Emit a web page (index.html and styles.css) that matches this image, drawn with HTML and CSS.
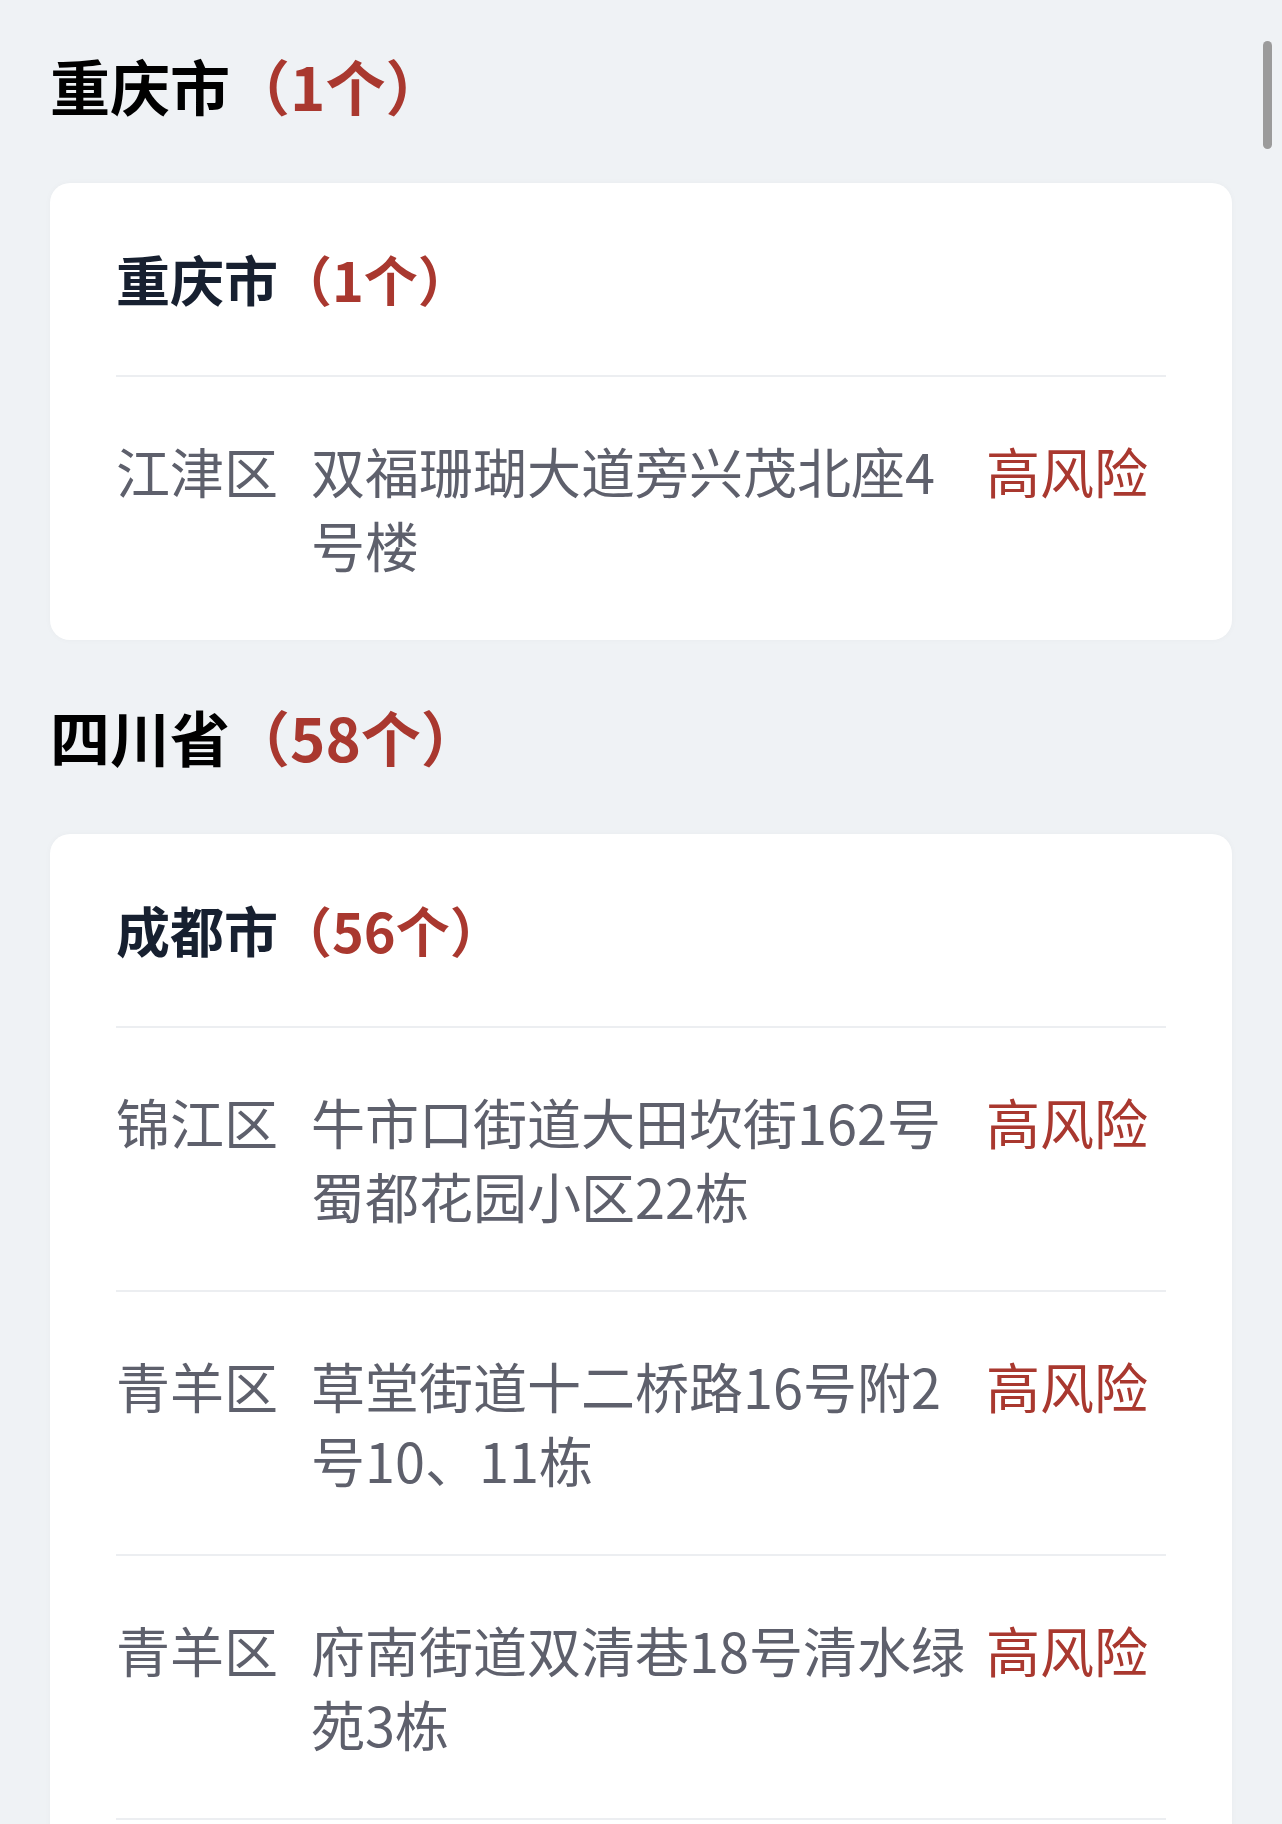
FILE: index.html
```html
<!DOCTYPE html>
<html lang="zh-CN">
<head>
<meta charset="utf-8">
<title>风险地区</title>
<link rel="stylesheet" href="styles.css">
</head>
<body>
<div class="page">
  <section class="section">
    <h1 class="province-title">重庆市<span class="count">（1个）</span></h1>
    <div class="card">
      <h2 class="city-title">重庆市<span class="count">（1个）</span></h2>
      <div class="row">
        <div class="district">江津区</div>
        <div class="address">双福珊瑚大道旁兴茂北座4号楼</div>
        <div class="risk">高风险</div>
      </div>
    </div>
  </section>
  <section class="section">
    <h1 class="province-title">四川省<span class="count">（58个）</span></h1>
    <div class="card">
      <h2 class="city-title">成都市<span class="count">（56个）</span></h2>
      <div class="row">
        <div class="district">锦江区</div>
        <div class="address">牛市口街道大田坎街162号蜀都花园小区22栋</div>
        <div class="risk">高风险</div>
      </div>
      <div class="row">
        <div class="district">青羊区</div>
        <div class="address">草堂街道十二桥路16号附2号10、11栋</div>
        <div class="risk">高风险</div>
      </div>
      <div class="row">
        <div class="district">青羊区</div>
        <div class="address">府南街道双清巷18号清水绿苑3栋</div>
        <div class="risk">高风险</div>
      </div>
      <div class="row">
        <div class="district">青羊区</div>
        <div class="address">府南街道</div>
        <div class="risk">高风险</div>
      </div>
    </div>
  </section>
</div>
<div class="scrollbar"></div>
</body>
</html>
```

FILE: styles.css
```css
html, body {
  margin: 0;
  padding: 0;
}

body {
  background: #eff2f5;
  font-family: "Noto Sans CJK SC", "Noto Sans", sans-serif;
  overflow: hidden;
}

.page {
  padding: 43px 50px 0;
}

.section + .section {
  margin-top: 54px;
}

.province-title {
  margin: 0 0 56px;
  font-size: 60px;
  line-height: 84px;
  font-weight: 700;
  color: #000;
}

.count {
  color: #a9382f;
}

.card {
  background: #fff;
  border-radius: 20px;
  padding: 0 66px 1px;
  box-shadow: 0 0 6px rgba(0, 0, 0, 0.03);
}

.city-title {
  margin: 0;
  padding: 59px 0;
  font-size: 54px;
  line-height: 74px;
  font-weight: 700;
  color: #172030;
  border-bottom: 2px solid #eceef1;
}

.row {
  display: flex;
  align-items: flex-start;
  padding: 57px 18px 57px 0;
  font-size: 54px;
  line-height: 74px;
  color: #5e606c;
}

.row + .row {
  border-top: 2px solid #eceef1;
}

.district {
  flex: none;
  width: 162px;
  margin-right: 33px;
}

.address {
  flex: 1;
  min-width: 0;
  margin-right: 20px;
}

.risk {
  flex: none;
  color: #a9382f;
}

.scrollbar {
  position: fixed;
  top: 41px;
  right: 10px;
  width: 9px;
  height: 108px;
  border-radius: 5px;
  background: #9b9b9b;
}
```
